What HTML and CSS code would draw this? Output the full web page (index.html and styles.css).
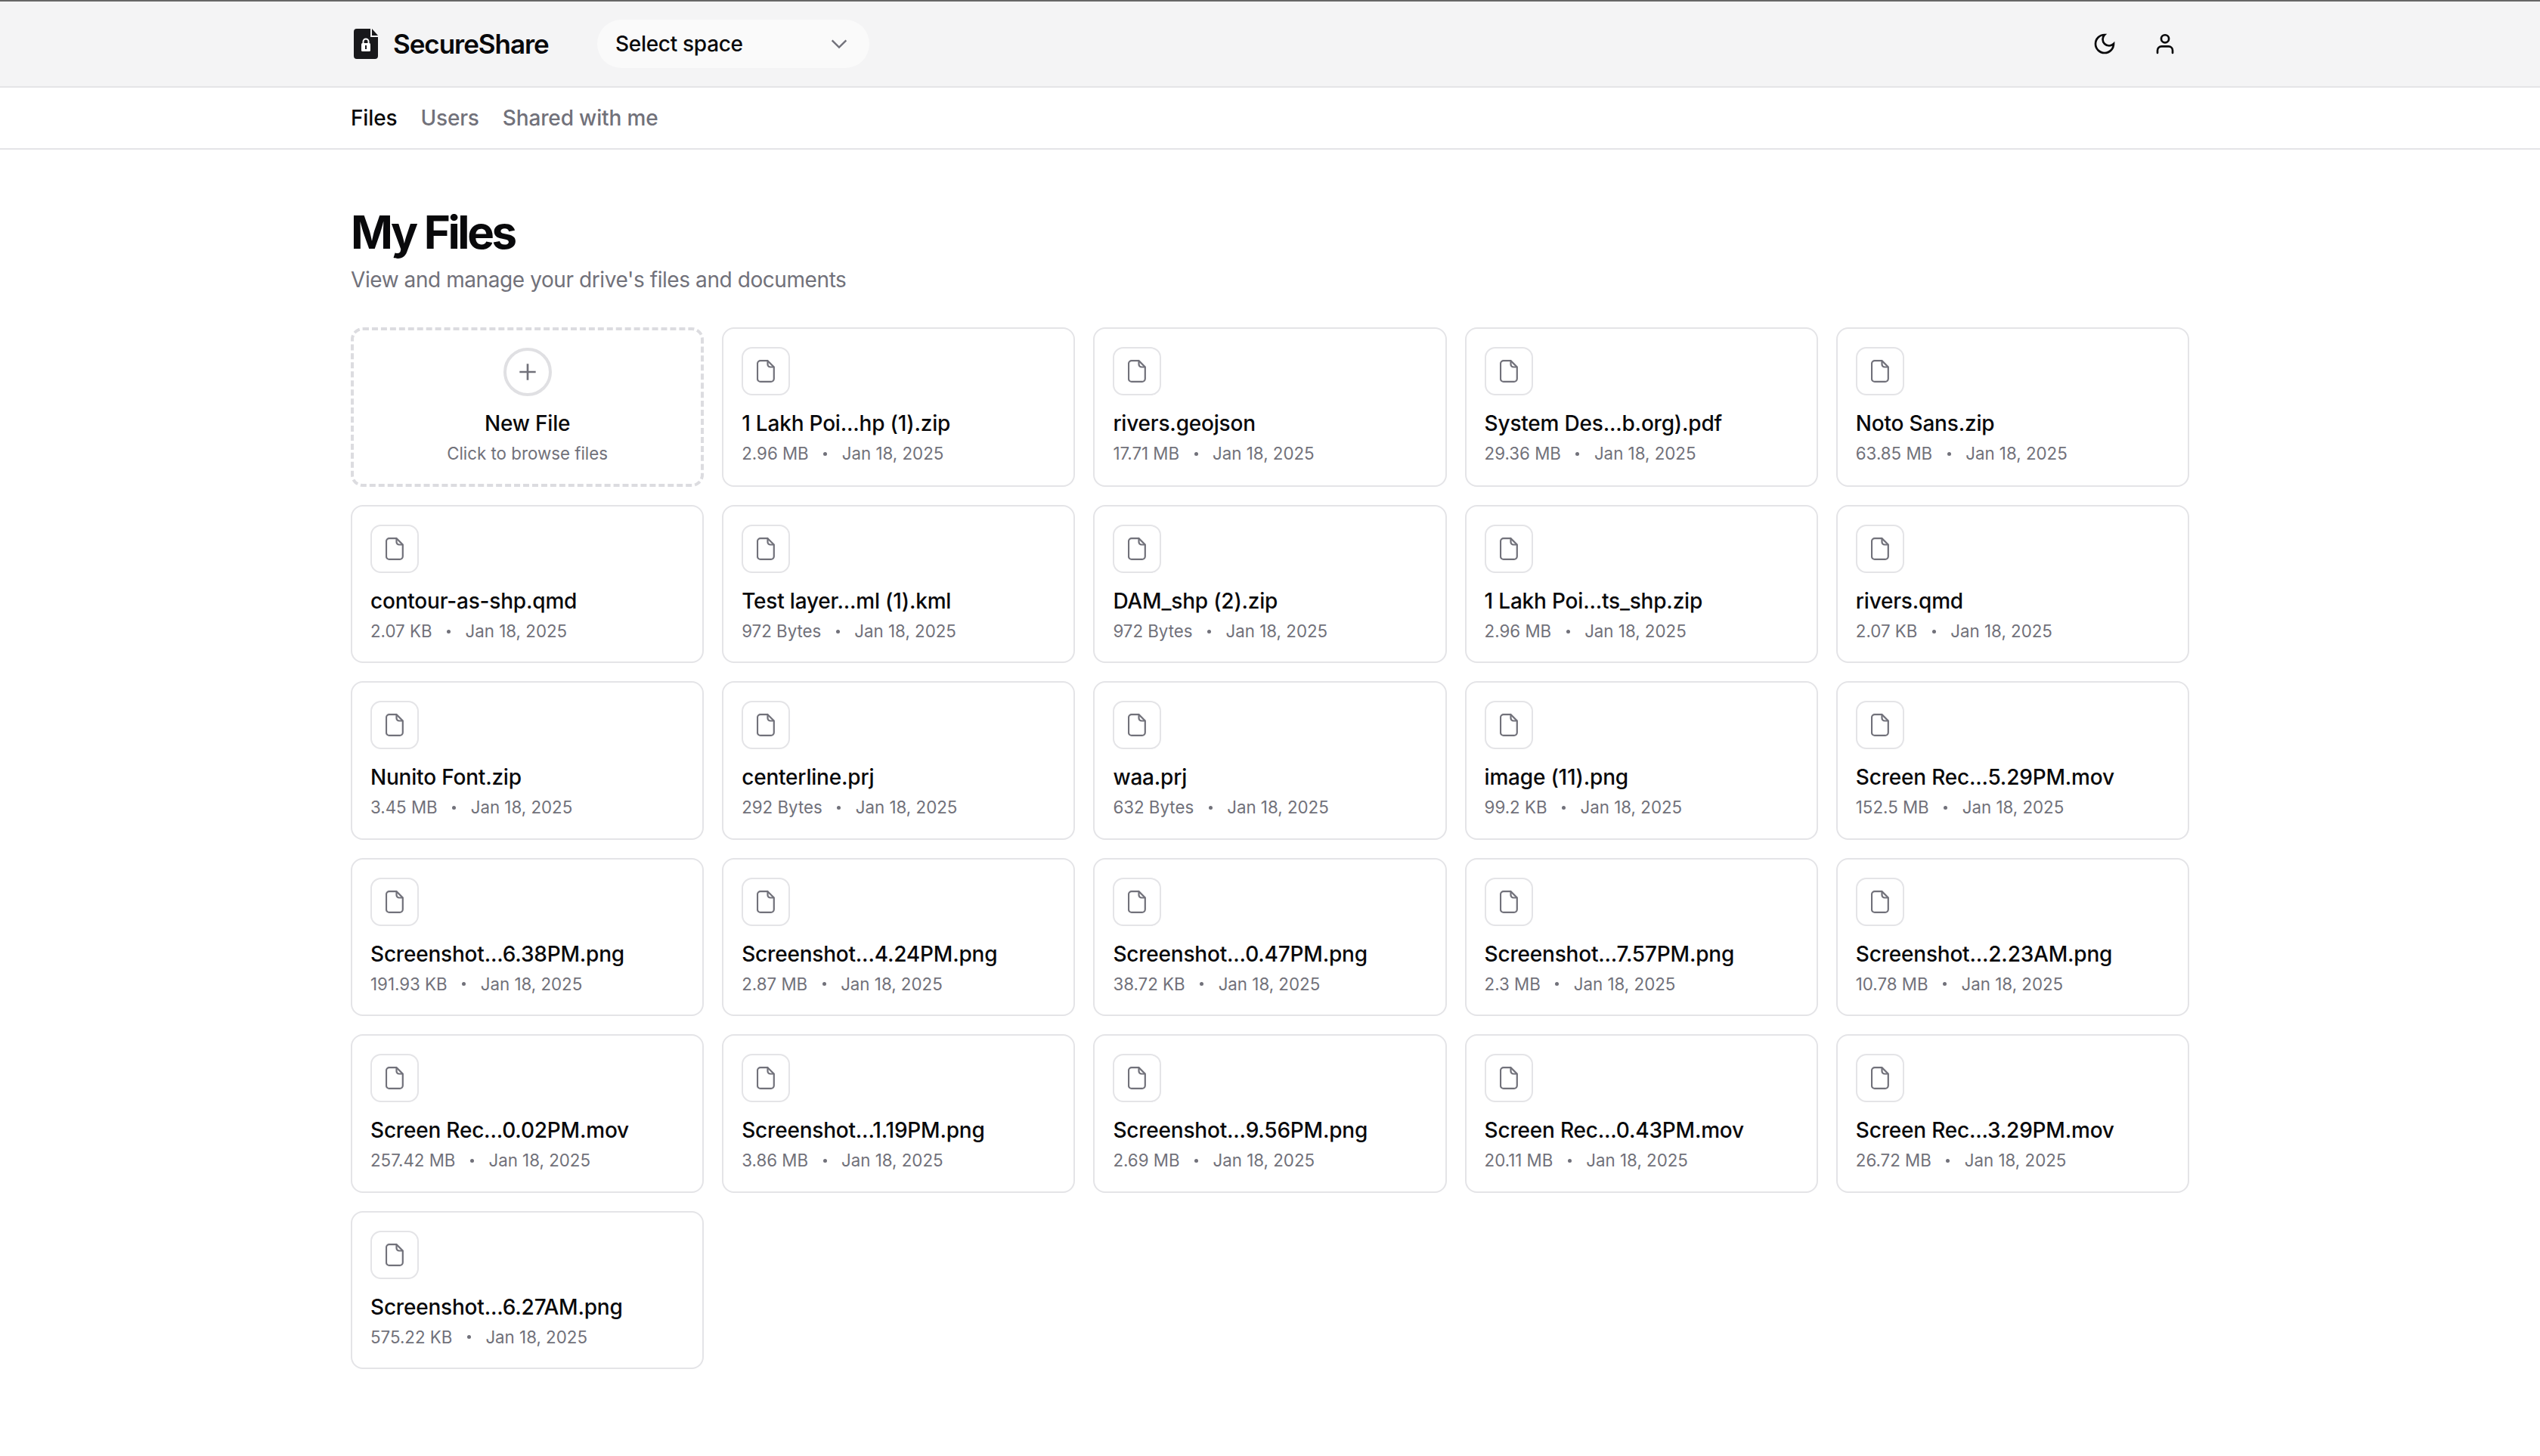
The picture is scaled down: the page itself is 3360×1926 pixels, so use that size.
FILE: index.html
```html
<!DOCTYPE html>
<html lang="en">
<head>
    <meta charset="UTF-8">
    <meta name="viewport" content="width=device-width, initial-scale=1.0">
    <title>SecureShare - My Files</title>
    <link rel="stylesheet" href="styles.css">
</head>
<body>
    <svg class="icon-defs" aria-hidden="true">
        <symbol id="file-icon" viewBox="0 0 24 30">
            <path d="M5 1.2h9.5l8.3 8.3V25a4 4 0 0 1-4 3.9H5a4 4 0 0 1-4-3.9V5a4 4 0 0 1 4-3.8z"/>
            <path d="M14.5 1.2V6a3.5 3.5 0 0 0 3.5 3.5h4.8"/>
        </symbol>
    </svg>

    <header class="topbar">
        <div class="container topbar-inner">
            <div class="brand">
                <svg class="brand-logo" viewBox="0 0 32 40">
                    <path fill="#18181b" d="M4 0h18v11h10v25a4 4 0 0 1-4 4H4a4 4 0 0 1-4-4V4a4 4 0 0 1 4-4z"/>
                    <path fill="#18181b" d="M24 0l8 9h-8z"/>
                    <path fill="none" stroke="#fff" stroke-width="2" d="M12.5 19v-2a3.5 3.5 0 0 1 7 0v2"/>
                    <rect fill="#fff" x="10" y="19" width="12" height="11" rx="1.5"/>
                    <rect fill="#18181b" x="15" y="22" width="2" height="5"/>
                </svg>
                <span class="brand-name">SecureShare</span>
            </div>
            <div class="space-select">
                <span>Select space</span>
                <svg viewBox="0 0 24 24" class="chevron"><path d="M4 8l8 8 8-8"/></svg>
            </div>
            <div class="topbar-actions">
                <svg viewBox="0 0 24 24" class="action-icon"><path d="M12 3a6 6 0 0 0 9 9 9 9 0 1 1-9-9Z"/></svg>
                <svg viewBox="0 0 24 24" class="action-icon"><circle cx="12" cy="7" r="3.8"/><path d="M4.5 21v-2.5a4 4 0 0 1 4-4h7a4 4 0 0 1 4 4V21"/></svg>
            </div>
        </div>
    </header>

    <nav class="subnav">
        <div class="container subnav-inner">
            <a class="active">Files</a>
            <a>Users</a>
            <a>Shared with me</a>
        </div>
    </nav>

    <main class="container">
        <h1>My Files</h1>
        <p class="subtitle">View and manage your drive's files and documents</p>

        <div class="file-grid">
            <div class="card new-file">
                <div class="plus-circle">
                    <svg viewBox="0 0 24 24"><path d="M4 12h16M12 4v16"/></svg>
                </div>
                <div class="file-name">New File</div>
                <div class="new-hint">Click to browse files</div>
            </div>

            <div class="card">
                <div class="file-thumb"><svg><use href="#file-icon"/></svg></div>
                <div class="file-name">1 Lakh Poi...hp (1).zip</div>
                <div class="file-meta"><span>2.96 MB</span><i></i><span>Jan 18, 2025</span></div>
            </div>
            <div class="card">
                <div class="file-thumb"><svg><use href="#file-icon"/></svg></div>
                <div class="file-name">rivers.geojson</div>
                <div class="file-meta"><span>17.71 MB</span><i></i><span>Jan 18, 2025</span></div>
            </div>
            <div class="card">
                <div class="file-thumb"><svg><use href="#file-icon"/></svg></div>
                <div class="file-name">System Des...b.org).pdf</div>
                <div class="file-meta"><span>29.36 MB</span><i></i><span>Jan 18, 2025</span></div>
            </div>
            <div class="card">
                <div class="file-thumb"><svg><use href="#file-icon"/></svg></div>
                <div class="file-name">Noto Sans.zip</div>
                <div class="file-meta"><span>63.85 MB</span><i></i><span>Jan 18, 2025</span></div>
            </div>

            <div class="card">
                <div class="file-thumb"><svg><use href="#file-icon"/></svg></div>
                <div class="file-name">contour-as-shp.qmd</div>
                <div class="file-meta"><span>2.07 KB</span><i></i><span>Jan 18, 2025</span></div>
            </div>
            <div class="card">
                <div class="file-thumb"><svg><use href="#file-icon"/></svg></div>
                <div class="file-name">Test layer...ml (1).kml</div>
                <div class="file-meta"><span>972 Bytes</span><i></i><span>Jan 18, 2025</span></div>
            </div>
            <div class="card">
                <div class="file-thumb"><svg><use href="#file-icon"/></svg></div>
                <div class="file-name">DAM_shp (2).zip</div>
                <div class="file-meta"><span>972 Bytes</span><i></i><span>Jan 18, 2025</span></div>
            </div>
            <div class="card">
                <div class="file-thumb"><svg><use href="#file-icon"/></svg></div>
                <div class="file-name">1 Lakh Poi...ts_shp.zip</div>
                <div class="file-meta"><span>2.96 MB</span><i></i><span>Jan 18, 2025</span></div>
            </div>
            <div class="card">
                <div class="file-thumb"><svg><use href="#file-icon"/></svg></div>
                <div class="file-name">rivers.qmd</div>
                <div class="file-meta"><span>2.07 KB</span><i></i><span>Jan 18, 2025</span></div>
            </div>

            <div class="card">
                <div class="file-thumb"><svg><use href="#file-icon"/></svg></div>
                <div class="file-name">Nunito Font.zip</div>
                <div class="file-meta"><span>3.45 MB</span><i></i><span>Jan 18, 2025</span></div>
            </div>
            <div class="card">
                <div class="file-thumb"><svg><use href="#file-icon"/></svg></div>
                <div class="file-name">centerline.prj</div>
                <div class="file-meta"><span>292 Bytes</span><i></i><span>Jan 18, 2025</span></div>
            </div>
            <div class="card">
                <div class="file-thumb"><svg><use href="#file-icon"/></svg></div>
                <div class="file-name">waa.prj</div>
                <div class="file-meta"><span>632 Bytes</span><i></i><span>Jan 18, 2025</span></div>
            </div>
            <div class="card">
                <div class="file-thumb"><svg><use href="#file-icon"/></svg></div>
                <div class="file-name">image (11).png</div>
                <div class="file-meta"><span>99.2 KB</span><i></i><span>Jan 18, 2025</span></div>
            </div>
            <div class="card">
                <div class="file-thumb"><svg><use href="#file-icon"/></svg></div>
                <div class="file-name">Screen Rec...5.29PM.mov</div>
                <div class="file-meta"><span>152.5 MB</span><i></i><span>Jan 18, 2025</span></div>
            </div>

            <div class="card">
                <div class="file-thumb"><svg><use href="#file-icon"/></svg></div>
                <div class="file-name">Screenshot...6.38PM.png</div>
                <div class="file-meta"><span>191.93 KB</span><i></i><span>Jan 18, 2025</span></div>
            </div>
            <div class="card">
                <div class="file-thumb"><svg><use href="#file-icon"/></svg></div>
                <div class="file-name">Screenshot...4.24PM.png</div>
                <div class="file-meta"><span>2.87 MB</span><i></i><span>Jan 18, 2025</span></div>
            </div>
            <div class="card">
                <div class="file-thumb"><svg><use href="#file-icon"/></svg></div>
                <div class="file-name">Screenshot...0.47PM.png</div>
                <div class="file-meta"><span>38.72 KB</span><i></i><span>Jan 18, 2025</span></div>
            </div>
            <div class="card">
                <div class="file-thumb"><svg><use href="#file-icon"/></svg></div>
                <div class="file-name">Screenshot...7.57PM.png</div>
                <div class="file-meta"><span>2.3 MB</span><i></i><span>Jan 18, 2025</span></div>
            </div>
            <div class="card">
                <div class="file-thumb"><svg><use href="#file-icon"/></svg></div>
                <div class="file-name">Screenshot...2.23AM.png</div>
                <div class="file-meta"><span>10.78 MB</span><i></i><span>Jan 18, 2025</span></div>
            </div>

            <div class="card">
                <div class="file-thumb"><svg><use href="#file-icon"/></svg></div>
                <div class="file-name">Screen Rec...0.02PM.mov</div>
                <div class="file-meta"><span>257.42 MB</span><i></i><span>Jan 18, 2025</span></div>
            </div>
            <div class="card">
                <div class="file-thumb"><svg><use href="#file-icon"/></svg></div>
                <div class="file-name">Screenshot...1.19PM.png</div>
                <div class="file-meta"><span>3.86 MB</span><i></i><span>Jan 18, 2025</span></div>
            </div>
            <div class="card">
                <div class="file-thumb"><svg><use href="#file-icon"/></svg></div>
                <div class="file-name">Screenshot...9.56PM.png</div>
                <div class="file-meta"><span>2.69 MB</span><i></i><span>Jan 18, 2025</span></div>
            </div>
            <div class="card">
                <div class="file-thumb"><svg><use href="#file-icon"/></svg></div>
                <div class="file-name">Screen Rec...0.43PM.mov</div>
                <div class="file-meta"><span>20.11 MB</span><i></i><span>Jan 18, 2025</span></div>
            </div>
            <div class="card">
                <div class="file-thumb"><svg><use href="#file-icon"/></svg></div>
                <div class="file-name">Screen Rec...3.29PM.mov</div>
                <div class="file-meta"><span>26.72 MB</span><i></i><span>Jan 18, 2025</span></div>
            </div>

            <div class="card">
                <div class="file-thumb"><svg><use href="#file-icon"/></svg></div>
                <div class="file-name">Screenshot...6.27AM.png</div>
                <div class="file-meta"><span>575.22 KB</span><i></i><span>Jan 18, 2025</span></div>
            </div>
        </div>
    </main>
</body>
</html>
```

FILE: styles.css
```css
/* General Page Styles */
* {
    box-sizing: border-box;
}

body {
    margin: 0;
    background: #fff;
    color: #09090b;
    font-family: Inter, "Liberation Sans", sans-serif;
}

.icon-defs {
    display: none;
}

.container {
    width: 2432px;
    margin: 0 auto;
}

/* Top Bar */
.topbar {
    height: 116px;
    background: #f4f4f5;
    border-top: 2px solid #666;
    border-bottom: 2px solid #e4e4e7;
}

.topbar-inner {
    height: 112px;
    display: flex;
    align-items: center;
}

.brand {
    display: flex;
    align-items: center;
    gap: 20px;
    margin-left: 4px;
    width: 322px;
}

.brand-logo {
    width: 32px;
    height: 40px;
}

.brand-name {
    font-size: 35px;
    font-weight: 600;
    letter-spacing: -1.05px;
}

.space-select {
    width: 360px;
    height: 64px;
    padding: 0 26px 0 24px;
    display: flex;
    align-items: center;
    justify-content: space-between;
    background: #fafafa;
    border-radius: 32px;
    font-size: 28px;
    font-weight: 500;
    letter-spacing: -0.3px;
}

.chevron {
    width: 28px;
    height: 28px;
    fill: none;
    stroke: #71717a;
    stroke-width: 2;
}

.topbar-actions {
    margin-left: auto;
    margin-right: 16px;
    display: flex;
    align-items: center;
    gap: 48px;
}

.action-icon {
    width: 32px;
    height: 32px;
    fill: none;
    stroke: #09090b;
    stroke-width: 2;
    stroke-linecap: round;
}

/* Sub Navigation */
.subnav {
    height: 82px;
    border-bottom: 2px solid #e4e4e7;
}

.subnav-inner {
    height: 80px;
    display: flex;
    align-items: center;
    gap: 31px;
    font-size: 28px;
    font-weight: 500;
    letter-spacing: -0.15px;
    color: #71717a;
}

.subnav-inner .active {
    color: #09090b;
}

/* Heading */
h1 {
    margin: 73px 0 0;
    font-size: 60px;
    line-height: 72px;
    font-weight: 700;
    letter-spacing: -3.4px;
}

.subtitle {
    margin: 7px 0 0;
    font-size: 28px;
    line-height: 40px;
    letter-spacing: -0.42px;
    color: #71717a;
}

/* File Grid */
.file-grid {
    margin-top: 43px;
    padding-bottom: 100px;
    display: grid;
    grid-template-columns: repeat(5, 1fr);
    gap: 24px;
}

.card {
    min-height: 209.4px;
    padding: 24px;
    border: 2px solid #e4e4e7;
    border-radius: 16px;
    background: #fff;
}

.file-thumb {
    width: 64px;
    height: 64px;
    display: flex;
    align-items: center;
    justify-content: center;
    border: 2px solid #e4e4e7;
    border-radius: 14px;
}

.file-thumb svg {
    width: 24px;
    height: 30px;
    fill: none;
    stroke: #71717a;
    stroke-width: 2.2;
}

.file-name {
    margin-top: 17px;
    font-size: 28px;
    line-height: 40px;
    font-weight: 500;
    letter-spacing: -0.2px;
}

.file-meta {
    margin-top: 4px;
    display: flex;
    align-items: center;
    gap: 19.5px;
    font-size: 22.3px;
    line-height: 32px;
    color: #71717a;
}

.file-meta i {
    width: 5px;
    height: 5px;
    border-radius: 50%;
    background: #71717a;
}

/* New File Tile */
.new-file {
    min-height: 211px;
    padding: 23px 24px 0;
    border: 4px dashed #dcdce0;
    display: flex;
    flex-direction: column;
    align-items: center;
}

.new-file .file-name {
    margin-top: 16px;
}

.plus-circle {
    width: 64px;
    height: 64px;
    display: flex;
    align-items: center;
    justify-content: center;
    border: 4px solid #e0e0e3;
    border-radius: 50%;
}

.plus-circle svg {
    width: 32px;
    height: 32px;
    fill: none;
    stroke: #71717a;
    stroke-width: 2;
}

.new-hint {
    margin-top: 4px;
    font-size: 22.3px;
    line-height: 32px;
    color: #71717a;
}
```
